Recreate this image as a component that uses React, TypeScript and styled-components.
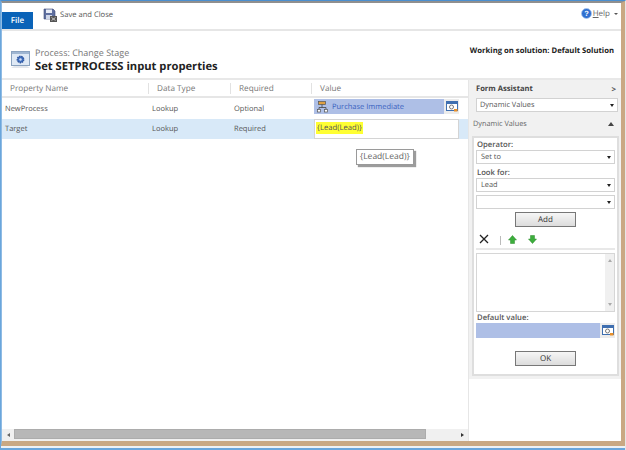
import React from 'react';
import styled, { createGlobalStyle } from 'styled-components';

const GlobalStyle = createGlobalStyle`
    html, body {
        margin: 0;
        padding: 0;
        background: #fff;
    }
    body {
        font-family: "Open Sans", "Noto Sans", "Liberation Sans", sans-serif;
        font-size: 8px;
        color: #555;
        text-rendering: geometricPrecision;
    }
`

const Screen = styled.div`
    width: 626px;
    height: 450px;
    box-sizing: border-box;
    display: flex;
    flex-direction: column;
    overflow: hidden;
    border-top: 1px solid #4a8fd0;
    border-left: 1px solid #6aa6dc;
    border-right: 1px solid #e6e6e6;
    background: #fff;
`

const Window = styled.div`
    flex: 1;
    min-height: 0;
    display: flex;
    flex-direction: column;
    border-top: 2px solid #8f8f8f;
    border-left: 1px solid #8fbbe4;
    border-right: 4px solid #c9a883;
    border-bottom: 5px solid #c9a883;
`

const BottomEdge = styled.div`
    height: 4px;
    background: #eef1f4;
    border-bottom: 2px solid #6aa6dc;
    box-sizing: border-box;
`

const Toolbar = styled.div`
    height: 26px;
    display: flex;
    align-items: flex-end;
    border-bottom: 2px solid #e6e6e6;
    flex-shrink: 0;
`

const FileTab = styled.div`
    width: 31px;
    height: 17px;
    background: #0a63b8;
    color: #fff;
    font-weight: 600;
    font-size: 8px;
    display: flex;
    align-items: center;
    justify-content: center;
`

const ToolButton = styled.div`
    align-self: flex-start;
    margin: 5px 0 0 10px;
    display: flex;
    align-items: center;
    gap: 3px;
    color: #555;
    font-size: 7.6px;
`

const HelpLink = styled.div`
    margin-left: auto;
    align-self: flex-start;
    margin-top: 5px;
    margin-right: 3px;
    display: flex;
    align-items: center;
    gap: 1px;
    color: #666;
    font-size: 8px;
    u {
        text-decoration: underline;
    }
`

const Caret = styled.span`
    display: inline-block;
    margin-left: 3px;
    border-left: 2px solid transparent;
    border-right: 2px solid transparent;
    border-top: 2px solid #555;
`

const PageHeader = styled.div`
    height: 49px;
    display: flex;
    flex-shrink: 0;
    border-bottom: 2px solid #e8e8e8;
    box-sizing: border-box;
    padding: 15px 7px 0 8px;
`

const HeaderIcon = styled.div`
    margin-top: 5px;
    margin-right: 4px;
`

const TitleBlock = styled.div`
    display: flex;
    flex-direction: column;
`

const Breadcrumb = styled.div`
    font-size: 9px;
    line-height: 13px;
    color: #777;
`

const Title = styled.div`
    font-size: 11.2px;
    line-height: 15px;
    font-weight: 700;
    color: #222;
`

const SolutionNote = styled.div`
    margin-left: auto;
    margin-top: -1px;
    font-size: 7.7px;
    line-height: 12px;
    font-weight: 700;
    color: #222;
`

const Body = styled.div`
    flex: 1;
    min-height: 0;
    display: flex;
`

const GridPane = styled.div`
    position: relative;
    flex: 1;
    min-width: 0;
    display: flex;
    flex-direction: column;
    border-right: 1px solid #e6e6e6;
`

const GridRows = styled.div`
    flex: 1;
`

const HeadRow = styled.div`
    height: 18px;
    display: grid;
    grid-template-columns: 146px 82px 81px 1fr;
    align-items: center;
    border-bottom: 2px solid #e6e6e6;
    box-sizing: border-box;
`

const HeadCell = styled.div`
    height: 11px;
    line-height: 11px;
    font-size: 8.2px;
    color: #777;
    padding-left: 8px;
    border-left: 1px solid #e2e2e2;
    &:first-child {
        border-left: none;
    }
`

const Row = styled.div<{ $selected?: boolean }>`
    height: ${p => (p.$selected ? 20 : 21)}px;
    display: grid;
    grid-template-columns: 146px 82px 81px 1fr;
    align-items: center;
    background: ${p => (p.$selected ? '#d8e9f8' : '#fff')};
`

const Cell = styled.div`
    font-size: 7.5px;
    color: #555;
    padding-left: 3px;
    & + & {
        padding-left: 4px;
    }
`

const ValueCell = styled.div`
    margin-left: 3px;
    margin-right: 9px;
    align-self: stretch;
    display: flex;
    align-items: flex-start;
`

const LookupField = styled.div`
    flex: 1;
    height: 15px;
    margin-top: 1px;
    display: flex;
    align-items: center;
    gap: 4px;
    padding-left: 3px;
    background: #aebfe6;
    color: #3a62c0;
    font-size: 7.5px;
`

const LookupButton = styled.div<{ $inRow?: boolean }>`
    width: 15px;
    height: 15px;
    margin-top: ${p => (p.$inRow ? 1 : 0)}px;
    display: flex;
    align-items: center;
    justify-content: center;
    background: #ececec;
    flex-shrink: 0;
`

const ValueInput = styled.div`
    flex: 1;
    height: 20px;
    box-sizing: border-box;
    border: 1px solid #d4d4d4;
    background: #fff;
    padding: 2px 0 0 1px;
`

const Highlight = styled.span`
    display: inline-block;
    height: 12px;
    line-height: 12px;
    padding: 0 1px;
    background: #ffff33;
    color: #555;
    font-size: 7.7px;
`

const Tooltip = styled.div`
    position: absolute;
    left: 354px;
    top: 69px;
    height: 14px;
    line-height: 13px;
    padding: 0 3px;
    background: #fff;
    border: 1px solid #9a9a9a;
    box-shadow: 2px 2px 1px #9c9c9c;
    color: #666;
    font-size: 8.5px;
`

const ScrollBar = styled.div`
    height: 12px;
    display: flex;
    align-items: stretch;
    background: #f0f0f0;
    flex-shrink: 0;
`

const ScrollButton = styled.div<{ $width: number; $end?: boolean }>`
    width: ${p => p.$width}px;
    flex-shrink: 0;
    display: flex;
    align-items: center;
    justify-content: ${p => (p.$end ? 'flex-end' : 'center')};
    padding-right: ${p => (p.$end ? 4 : 0)}px;
    box-sizing: border-box;
`

const ScrollThumb = styled.div`
    flex: 1;
    margin-bottom: 2px;
    background: #b7b7b7;
    border: 1px solid #acacac;
    box-sizing: border-box;
`

const Arrow = styled.span<{ $dir: 'left' | 'right' | 'up' | 'down'; $color?: string; $size?: number }>`
    display: inline-block;
    width: 0;
    height: 0;
    ${p => {
        const s = p.$size ?? 3;
        const c = p.$color ?? '#333';
        const side = `${s}px solid transparent`;
        const main = `${s + 1}px solid ${c}`;
        if (p.$dir === 'left') return `border-top: ${side}; border-bottom: ${side}; border-right: ${main};`;
        if (p.$dir === 'right') return `border-top: ${side}; border-bottom: ${side}; border-left: ${main};`;
        if (p.$dir === 'up') return `border-left: ${side}; border-right: ${side}; border-bottom: ${main};`;
        return `border-left: ${side}; border-right: ${side}; border-top: ${main};`;
    }}
`

const Assistant = styled.div`
    width: 152px;
    flex-shrink: 0;
    display: flex;
    flex-direction: column;
    background: #fff;
`

const AssistantTop = styled.div`
    background: #f1f1f1;
    padding: 0 2px 3px 3px;
`

const AssistantTitle = styled.div`
    height: 18px;
    display: flex;
    align-items: center;
    justify-content: space-between;
    padding: 0 3px 0 4px;
    font-weight: 700;
    font-size: 7.6px;
    color: #444;
`

const Chevron = styled.span`
    font-size: 8px;
    font-weight: 700;
    color: #555;
`

const AssistantSection = styled.div`
    height: 24px;
    display: flex;
    align-items: center;
    justify-content: space-between;
    padding: 0 5px 0 1px;
    box-sizing: border-box;
    font-size: 7.3px;
    color: #666;
`

const Select = styled.div<{ $inset?: boolean }>`
    height: 14px;
    box-sizing: border-box;
    margin: ${p => (p.$inset ? '0 1px 0 4px' : '0 1px 0 0')};
    padding: 0 3px;
    display: flex;
    align-items: center;
    justify-content: space-between;
    background: #fff;
    border: 1px solid #d2d2d2;
    font-size: 7.4px;
    color: #555;
`

const Panel = styled.div`
    height: 240px;
    box-sizing: border-box;
    background: #fff;
    border: 2px solid #dedede;
    padding: 1px 2px 0 2px;
    display: flex;
    flex-direction: column;
`

const FieldLabel = styled.div`
    height: 11px;
    line-height: 13px;
    padding-left: 1px;
    font-size: 7.7px;
    font-weight: 600;
    color: #555;
`

const PanelSelect = styled(Select)`
    margin: 0 0 3px 0;
    height: 14px;
    padding-left: 4px;
`

const PushButton = styled.div`
    width: 61px;
    height: 15px;
    box-sizing: border-box;
    align-self: center;
    display: flex;
    align-items: center;
    justify-content: center;
    border: 1px solid #777;
    background: linear-gradient(#f6f6f6, #dcdcdc);
    font-size: 8px;
    color: #333;
`

const ActionRow = styled.div`
    height: 20px;
    box-sizing: border-box;
    margin-top: 3px;
    display: flex;
    align-items: center;
    padding-left: 3px;
    border-bottom: 2px solid #e8e8e8;
    flex-shrink: 0;
`

const ActionDivider = styled.span`
    width: 1px;
    height: 9px;
    margin: 3px 7px 0 11px;
    background: #bbb;
`

const ArrowSlot = styled.span`
    display: flex;
    margin-right: 11px;
`

const ListBox = styled.div`
    height: 59px;
    box-sizing: border-box;
    margin-top: 3px;
    display: flex;
    justify-content: flex-end;
    border: 1px solid #d6d6d6;
`

const ListScroll = styled.div`
    width: 9px;
    background: #f0f0f0;
    display: flex;
    flex-direction: column;
    align-items: center;
    justify-content: space-between;
    padding: 5px 0;
`

const DefaultField = styled.div`
    height: 15px;
    display: flex;
`

const DefaultInput = styled.div`
    flex: 1;
    background: #aebfe6;
`

const OkButton = styled(PushButton)`
    margin-top: 13px;
`

function LookupIcon() {
    return (
        <svg width="12" height="11" viewBox="0 0 12 11">
            <rect x="0.5" y="0.5" width="11" height="9" fill="#fff" stroke="#3f6fb0" />
            <rect x="1" y="1" width="10" height="2" fill="#3f6fb0" />
            <circle cx="5.5" cy="6" r="2" fill="none" stroke="#777" />
            <rect x="8" y="8" width="3.5" height="2.5" fill="#e8902a" />
        </svg>
    );
}

function SaveIcon() {
    return (
        <svg width="14" height="14" viewBox="0 0 14 14">
            <path d="M1 1h9l2 2v8H1z" fill="#5f6f9f" stroke="#3d4a78" strokeWidth="0.6" />
            <rect x="3" y="1.5" width="6" height="3.5" fill="#e8ecf6" />
            <rect x="3" y="7" width="6" height="4" fill="#cfd6e8" />
            <rect x="7" y="8" width="7" height="6" fill="#555" />
            <path d="M8.5 9.5l4 3M12.5 9.5l-4 3" stroke="#ddd" strokeWidth="0.8" />
        </svg>
    );
}

function HelpIcon() {
    return (
        <svg width="11" height="11" viewBox="0 0 11 11">
            <circle cx="5.5" cy="5.5" r="5" fill="#2f6fd0" stroke="#a9c6ee" strokeWidth="0.8" />
            <text x="5.5" y="8.2" textAnchor="middle" fontSize="7.5" fontWeight="700" fill="#fff" fontFamily="Liberation Sans, sans-serif">?</text>
        </svg>
    );
}

function ProcessIcon() {
    return (
        <svg width="21" height="19" viewBox="0 0 21 19">
            <path d="M1 17l3-2h13l3 2z" fill="#e4e7ec" />
            <rect x="1.5" y="0.5" width="18" height="14" fill="#dfe9f5" stroke="#8aa2bf" />
            <rect x="2" y="1" width="17" height="2" fill="#9fb6d2" />
            <circle cx="10.5" cy="8.5" r="3.2" fill="#3f6fc0" stroke="#2f559c" strokeDasharray="1.4 0.8" strokeWidth="1.4" />
            <circle cx="10.5" cy="8.5" r="1.2" fill="#cfdcf2" />
        </svg>
    );
}

function ProcessRefIcon() {
    return (
        <svg width="11" height="12" viewBox="0 0 11 12">
            <rect x="1.5" y="0.5" width="7" height="3" fill="#e0a040" stroke="#555" strokeWidth="0.7" />
            <path d="M5 3.5v3M2 6.5h7M2 6.5v2M9 6.5v2" stroke="#444" strokeWidth="0.8" fill="none" />
            <rect x="0.5" y="8.5" width="3" height="2.5" fill="#fff" stroke="#555" strokeWidth="0.7" />
            <rect x="7.5" y="8.5" width="3" height="2.5" fill="#fff" stroke="#555" strokeWidth="0.7" />
        </svg>
    );
}

function CrossIcon() {
    return (
        <svg width="10" height="10" viewBox="0 0 10 10">
            <path d="M1 1l8 8M9 1l-8 8" stroke="#222" strokeWidth="1.3" />
        </svg>
    );
}

function GreenArrow({ down }: { down?: boolean }) {
    return (
        <svg width="9" height="9" viewBox="0 0 9 9">
            <path
                d={down ? 'M2.5 0.5h4v3.5h2L4.5 8.5 0.5 4h2z' : 'M4.5 0.5l4 4.5h-2v3.5h-4V5h-2z'}
                fill="#3cae3c"
                stroke="#2b8a2b"
                strokeWidth="0.5"
            />
        </svg>
    );
}

function App() {
    return (
        <Screen>
            <GlobalStyle />
            <Window>
                <Toolbar>
                    <FileTab>File</FileTab>
                    <ToolButton>
                        <SaveIcon />
                        Save and Close
                    </ToolButton>
                    <HelpLink>
                        <HelpIcon />
                        <span><u>H</u>elp</span>
                        <Caret />
                    </HelpLink>
                </Toolbar>
                <PageHeader>
                    <HeaderIcon><ProcessIcon /></HeaderIcon>
                    <TitleBlock>
                        <Breadcrumb>Process: Change Stage</Breadcrumb>
                        <Title>Set SETPROCESS input properties</Title>
                    </TitleBlock>
                    <SolutionNote>Working on solution: Default Solution</SolutionNote>
                </PageHeader>
                <Body>
                    <GridPane>
                        <GridRows>
                            <HeadRow>
                                <HeadCell>Property Name</HeadCell>
                                <HeadCell>Data Type</HeadCell>
                                <HeadCell>Required</HeadCell>
                                <HeadCell>Value</HeadCell>
                            </HeadRow>
                            <Row>
                                <Cell>NewProcess</Cell>
                                <Cell>Lookup</Cell>
                                <Cell>Optional</Cell>
                                <ValueCell>
                                    <LookupField>
                                        <ProcessRefIcon />
                                        Purchase Immediate
                                    </LookupField>
                                    <LookupButton $inRow><LookupIcon /></LookupButton>
                                </ValueCell>
                            </Row>
                            <Row $selected>
                                <Cell>Target</Cell>
                                <Cell>Lookup</Cell>
                                <Cell>Required</Cell>
                                <ValueCell>
                                    <ValueInput><Highlight>{'{Lead(Lead)}'}</Highlight></ValueInput>
                                </ValueCell>
                            </Row>
                        </GridRows>
                        <Tooltip>{'{Lead(Lead)}'}</Tooltip>
                        <ScrollBar>
                            <ScrollButton $width={12}><Arrow $dir="left" $color="#666" $size={2} /></ScrollButton>
                            <ScrollThumb />
                            <ScrollButton $width={42} $end><Arrow $dir="right" $color="#333" $size={2} /></ScrollButton>
                        </ScrollBar>
                    </GridPane>
                    <Assistant>
                        <AssistantTop>
                            <AssistantTitle>
                                Form Assistant
                                <Chevron>&gt;</Chevron>
                            </AssistantTitle>
                            <Select $inset>
                                Dynamic Values
                                <Arrow $dir="down" $color="#222" $size={2} />
                            </Select>
                            <AssistantSection>
                                Dynamic Values
                                <Arrow $dir="up" $color="#444" $size={3} />
                            </AssistantSection>
                            <Panel>
                                <FieldLabel>Operator:</FieldLabel>
                                <PanelSelect>
                                    Set to
                                    <Arrow $dir="down" $color="#222" $size={2} />
                                </PanelSelect>
                                <FieldLabel>Look for:</FieldLabel>
                                <PanelSelect>
                                    Lead
                                    <Arrow $dir="down" $color="#222" $size={2} />
                                </PanelSelect>
                                <PanelSelect>
                                    <span />
                                    <Arrow $dir="down" $color="#222" $size={2} />
                                </PanelSelect>
                                <PushButton>Add</PushButton>
                                <ActionRow>
                                    <CrossIcon />
                                    <ActionDivider />
                                    <ArrowSlot><GreenArrow /></ArrowSlot>
                                    <ArrowSlot><GreenArrow down /></ArrowSlot>
                                </ActionRow>
                                <ListBox>
                                    <ListScroll>
                                        <Arrow $dir="up" $color="#aaa" $size={2} />
                                        <Arrow $dir="down" $color="#aaa" $size={2} />
                                    </ListScroll>
                                </ListBox>
                                <FieldLabel>Default value:</FieldLabel>
                                <DefaultField>
                                    <DefaultInput />
                                    <LookupButton><LookupIcon /></LookupButton>
                                </DefaultField>
                                <OkButton>OK</OkButton>
                            </Panel>
                        </AssistantTop>
                    </Assistant>
                </Body>
            </Window>
            <BottomEdge />
        </Screen>
    );
}

export default App;
